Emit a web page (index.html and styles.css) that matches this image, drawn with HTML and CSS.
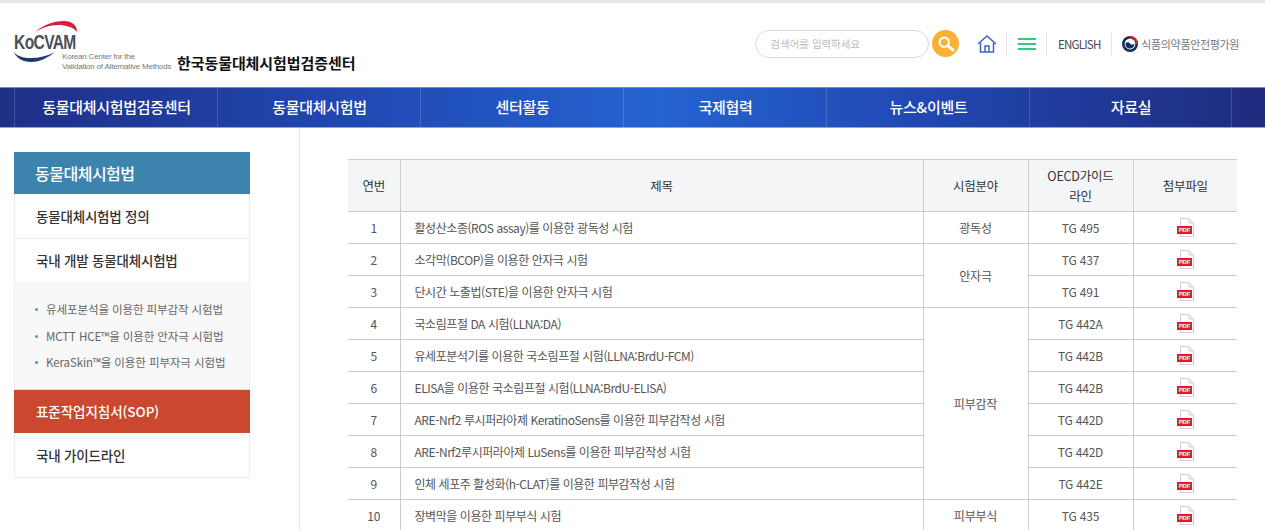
FILE: index.html
```html
<!DOCTYPE html>
<html lang="ko">
<head>
    <meta charset="UTF-8">
    <meta name="viewport" content="width=device-width, initial-scale=1.0">
    <title>한국동물대체시험법검증센터</title>
    <link rel="stylesheet" href="styles.css">
</head>
<body>

    <header class="header">
        <a class="logo">
            <div class="logo-mark">
                <svg class="logo-arc" width="64" height="12" viewBox="0 0 64 12">
                    <path d="M21 11 C30 3 42 0 50 0 C58 0 63 4 63 11 C59 6 52 4 44 4 C35 4 28 7 21 11 Z" fill="#d81f3a"/>
                </svg>
                <span class="logo-name">KoCVAM</span>
                <svg class="logo-swoosh" width="42" height="11" viewBox="0 0 42 11">
                    <path d="M0 0 C2 6 9 10 17 10 C26 10 35 5 41 0 C33 4 25 6 17 6 C9 6 3 4 0 0 Z" fill="#1e3a6e"/>
                </svg>
            </div>
            <div class="logo-sub">Korean Center for the<br>Validation of Alternative Methods</div>
            <strong class="logo-title">한국동물대체시험법검증센터</strong>
        </a>

        <div class="util">
            <div class="search">
                <input type="text" placeholder="검색어를 입력하세요">
                <button class="search-btn" aria-label="검색">
                    <svg width="18" height="18" viewBox="0 0 18 18" fill="none" stroke="#fff">
                        <circle cx="7.2" cy="7.2" r="4.6" stroke-width="2.2"/>
                        <path d="M10.8 10.8 L16 15" stroke-width="3" stroke-linecap="round"/>
                    </svg>
                </button>
            </div>
            <a class="util-item util-home">
                <svg width="20" height="18" viewBox="0 0 20 18" fill="none" stroke="#3f62c4" stroke-width="1.5">
                    <path d="M1 9 L10 1 L19 9"/>
                    <path d="M3.5 7.5 V17 H16.5 V7.5"/>
                    <path d="M8 17 V11 H12 V17"/>
                </svg>
            </a>
            <a class="util-item util-menu">
                <span></span><span></span><span></span>
            </a>
            <a class="util-item util-eng">ENGLISH</a>
            <a class="util-item util-org">
                <svg width="16" height="16" viewBox="0 0 16 16">
                    <circle cx="8" cy="8" r="8" fill="#14305f"/>
                    <path d="M8 0 A8 8 0 0 1 16 8 L14 8 A6 6 0 0 0 8 2 Z" fill="#d8232f"/>
                    <circle cx="8" cy="8" r="5.4" fill="#fff"/>
                    <path d="M3.4 7.5 C5 5.5 7 6 8 7.5 C9 9 11 9 12.6 7.5 C12.4 10.5 10.5 12.6 8 12.6 C5.2 12.6 3.4 10.4 3.4 7.5 Z" fill="#14305f"/>
                </svg>
                식품의약품안전평가원
            </a>
        </div>
    </header>

    <nav class="gnb">
        <ul>
            <li>동물대체시험법검증센터</li>
            <li>동물대체시험법</li>
            <li>센터활동</li>
            <li>국제협력</li>
            <li>뉴스&amp;이벤트</li>
            <li>자료실</li>
        </ul>
    </nav>

    <div class="container">
        <aside class="sidebar">
            <h2 class="side-title">동물대체시험법</h2>
            <a class="side-item">동물대체시험법 정의</a>
            <a class="side-item side-open">국내 개발 동물대체시험법</a>
            <ul class="side-sub">
                <li>유세포분석을 이용한 피부감작 시험법</li>
                <li>MCTT HCE™을 이용한 안자극 시험법</li>
                <li>KeraSkin™을 이용한 피부자극 시험법</li>
            </ul>
            <a class="side-item side-active">표준작업지침서(SOP)</a>
            <a class="side-item side-last">국내 가이드라인</a>
        </aside>

        <main class="content">
            <table class="list">
                <thead>
                    <tr>
                        <th class="col-no">연번</th>
                        <th class="col-title">제목</th>
                        <th class="col-field">시험분야</th>
                        <th class="col-tg">OECD가이드<br>라인</th>
                        <th class="col-file">첨부파일</th>
                    </tr>
                </thead>
                <tbody id="rows">
                    <tr>
                        <td>1</td><td class="left">활성산소종(ROS assay)를 이용한 광독성 시험</td>
                        <td>광독성</td><td>TG 495</td><td class="pdf"></td>
                    </tr>
                    <tr>
                        <td>2</td><td class="left">소각막(BCOP)을 이용한 안자극 시험</td>
                        <td rowspan="2">안자극</td><td>TG 437</td><td class="pdf"></td>
                    </tr>
                    <tr>
                        <td>3</td><td class="left">단시간 노출법(STE)을 이용한 안자극 시험</td>
                        <td>TG 491</td><td class="pdf"></td>
                    </tr>
                    <tr>
                        <td>4</td><td class="left">국소림프절 DA 시험(LLNA:DA)</td>
                        <td rowspan="6">피부감작</td><td>TG 442A</td><td class="pdf"></td>
                    </tr>
                    <tr>
                        <td>5</td><td class="left">유세포분석기를 이용한 국소림프절 시험(LLNA:BrdU-FCM)</td>
                        <td>TG 442B</td><td class="pdf"></td>
                    </tr>
                    <tr>
                        <td>6</td><td class="left">ELISA을 이용한 국소림프절 시험(LLNA:BrdU-ELISA)</td>
                        <td>TG 442B</td><td class="pdf"></td>
                    </tr>
                    <tr>
                        <td>7</td><td class="left">ARE-Nrf2 루시퍼라아제 KeratinoSens를 이용한 피부감작성 시험</td>
                        <td>TG 442D</td><td class="pdf"></td>
                    </tr>
                    <tr>
                        <td>8</td><td class="left">ARE-Nrf2루시퍼라아제 LuSens를 이용한 피부감작성 시험</td>
                        <td>TG 442D</td><td class="pdf"></td>
                    </tr>
                    <tr>
                        <td>9</td><td class="left">인체 세포주 활성화(h-CLAT)를 이용한 피부감작성 시험</td>
                        <td>TG 442E</td><td class="pdf"></td>
                    </tr>
                    <tr>
                        <td>10</td><td class="left">장벽막을 이용한 피부부식 시험</td>
                        <td>피부부식</td><td>TG 435</td><td class="pdf"></td>
                    </tr>
                </tbody>
            </table>
        </main>
    </div>

    <script>
        // same pdf icon in every row
        var icon = '<svg width="18" height="19" viewBox="0 0 18 19">' +
            '<path d="M3.5 .5 H12 L16.5 5 V18.5 H3.5 Z" fill="#fff" stroke="#cfcfcf"/>' +
            '<path d="M12 .5 V5 H16.5" fill="#eee" stroke="#cfcfcf"/>' +
            '<rect x="0" y="8" width="15" height="8" fill="#d3202f"/>' +
            '<text x="7.5" y="14" text-anchor="middle" class="pdf-label">PDF</text>' +
            '</svg>';
        var cells = document.querySelectorAll('#rows .pdf');
        for (var i = 0; i < cells.length; i++) {
            cells[i].innerHTML = icon;
        }
    </script>

</body>
</html>
```

FILE: styles.css
```css
* {
    box-sizing: border-box;
}

html, body {
    height: 100%;
}

body {
    margin: 0;
    height: 530px;
    overflow: hidden;
    background-color: #fff;
    color: #444;
    font-family: 'Noto Sans CJK KR', 'Noto Sans', sans-serif;
    border-top: 3px solid #e8e8e8;
}

ul {
    list-style: none;
    margin: 0;
    padding: 0;
}

/* header */
.header {
    height: 84px;
    display: flex;
    justify-content: space-between;
    padding: 0 26px 0 14px;
}

.logo {
    display: flex;
    align-items: flex-end;
    padding-bottom: 14px;
}

.logo-mark {
    position: relative;
    width: 48px;
    height: 52px;
}

.logo-arc {
    position: absolute;
    left: 0;
    top: 0;
}

.logo-name {
    position: absolute;
    left: 0;
    top: 9px;
    font-family: 'Liberation Sans', sans-serif;
    font-size: 19.5px;
    font-weight: 700;
    line-height: 24px;
    letter-spacing: -.8px;
    color: #4a4f5c;
    transform: scaleX(.8);
    transform-origin: left center;
}

.logo-swoosh {
    position: absolute;
    left: 0;
    top: 31px;
}

.logo-sub {
    width: 110px;
    margin-bottom: 1px;
    font-family: 'Liberation Sans', sans-serif;
    font-size: 8px;
    line-height: 10px;
    letter-spacing: -.2px;
    color: #777;
    white-space: nowrap;
}

.logo-title {
    margin-left: 5px;
    margin-bottom: 1px;
    font-size: 15px;
    line-height: 18px;
    font-weight: 700;
    letter-spacing: -.08px;
    color: #111;
}

.util {
    display: flex;
    align-items: center;
    padding-bottom: 3px;
}

.search {
    display: flex;
    align-items: center;
    gap: 3px;
    margin-right: 18px;
}

.search input {
    width: 174px;
    height: 28px;
    padding: 0 14px;
    border: 1px solid #d9d9d9;
    border-radius: 14px;
    font-family: inherit;
    font-size: 10.5px;
    outline: none;
}

.search input::placeholder {
    color: #bbb;
}

.search-btn {
    width: 27px;
    height: 27px;
    display: flex;
    align-items: center;
    justify-content: center;
    padding: 0;
    border: none;
    border-radius: 50%;
    background-color: #fbb034;
}

.util-item {
    display: flex;
    align-items: center;
    height: 22px;
    border-left: 1px solid #e4e4e4;
    font-size: 11.5px;
    white-space: nowrap;
}

.util-home {
    border-left: none;
    padding-right: 9px;
}

.util-menu {
    flex-direction: column;
    justify-content: center;
    gap: 3px;
    width: 40px;
}

.util-menu span {
    display: block;
    width: 18px;
    height: 2px;
    background-color: #2ecc80;
}

.util-eng {
    width: 65px;
    justify-content: center;
    color: #4a4a55;
    letter-spacing: -.75px;
}

.util-org {
    padding-left: 10px;
    gap: 3px;
    font-size: 11px;
    color: #777;
    letter-spacing: -.35px;
}

/* main nav */
.gnb {
    height: 41px;
    padding-left: 14px;
    background: linear-gradient(90deg, #1f2f86 0%, #2145ae 25%, #2463d2 52%, #2145ae 75%, #1f2b7e 100%);
    border-top: 1px solid #5c8fdc;
    border-bottom: 1px solid #7ea8e6;
}

.gnb ul {
    display: flex;
    height: 100%;
}

.gnb li {
    width: 203px;
    display: flex;
    align-items: center;
    justify-content: center;
    padding: 0 0 2px 1px;
    border-left: 1px solid rgba(255, 255, 255, .16);
    color: #fff;
    font-size: 15px;
    font-weight: 500;
    letter-spacing: -.3px;
}

.gnb li:last-child {
    border-right: 1px solid rgba(255, 255, 255, .16);
}

/* body */
.container {
    display: flex;
    height: 402px;
}

.sidebar {
    width: 300px;
    height: 100%;
    padding: 24px 49px 0 14px;
    border-right: 1px solid #e6e6e6;
}

.side-title {
    height: 42px;
    margin: 0;
    padding-left: 21px;
    background-color: #3c84ad;
    color: #fff;
    font-size: 16px;
    font-weight: 500;
    line-height: 42px;
    letter-spacing: -.5px;
}

.side-item {
    display: block;
    height: 45px;
    padding-left: 21px;
    border-left: 1px solid #ececec;
    border-right: 1px solid #ececec;
    border-bottom: 1px solid #ececec;
    color: #333;
    font-size: 13.5px;
    font-weight: 500;
    line-height: 44px;
    letter-spacing: -.2px;
}

.side-open {
    height: 43px;
    border-bottom: none;
    line-height: 43px;
}

.side-sub {
    height: 108px;
    padding: 14px 0 0 20px;
    background-color: #f8f8f8;
    border-bottom: 1px solid #ddd;
    border-left: 1px solid #ececec;
    border-right: 1px solid #ececec;
}

.side-sub li {
    position: relative;
    height: 26.5px;
    padding-left: 11px;
    color: #666;
    font-size: 11.5px;
    line-height: 26px;
    letter-spacing: -.1px;
    white-space: nowrap;
}

.side-sub li::before {
    content: "";
    position: absolute;
    left: 0;
    top: 12px;
    width: 3px;
    height: 3px;
    border-radius: 50%;
    background-color: #3c9fb5;
}

.side-active {
    height: 43px;
    padding-left: 22px;
    border: none;
    background-color: #c9482f;
    color: #fff;
    line-height: 43px;
    font-size: 13.5px;
    letter-spacing: -.05px;
}

.content {
    flex: 1;
    padding: 31px 28px 0 48px;
}

/* table */
.list {
    width: 889px;
    table-layout: fixed;
    border-collapse: collapse;
    font-size: 12px;
    color: #555;
    border-top: 1px solid #ccc;
}

.list th, .list td {
    border: 1px solid #ccc;
    text-align: center;
    vertical-align: middle;
    padding: 0;
    letter-spacing: -.2px;
}

.list tr > :first-child {
    border-left: none;
}

.list tr > :last-child {
    border-right: none;
}

.list th {
    height: 52px;
    background-color: #f4f5f7;
    color: #333;
    font-weight: 400;
    font-size: 12.5px;
    line-height: 20px;
}

.list td {
    height: 32px;
}

.list td.left {
    text-align: left;
    padding-left: 14px;
    letter-spacing: -.44px;
    white-space: nowrap;
}

.list td.pdf svg {
    display: block;
    margin: 0 auto;
    position: relative;
    left: 1px;
}

.pdf-label {
    font-family: 'Liberation Sans', sans-serif;
    font-size: 6px;
    font-weight: 700;
    fill: #fff;
}

.col-no { width: 52px; }
.col-title { width: 523px; }
.col-field { width: 105px; }
.col-tg { width: 105px; }
.col-file { width: 104px; }
```
